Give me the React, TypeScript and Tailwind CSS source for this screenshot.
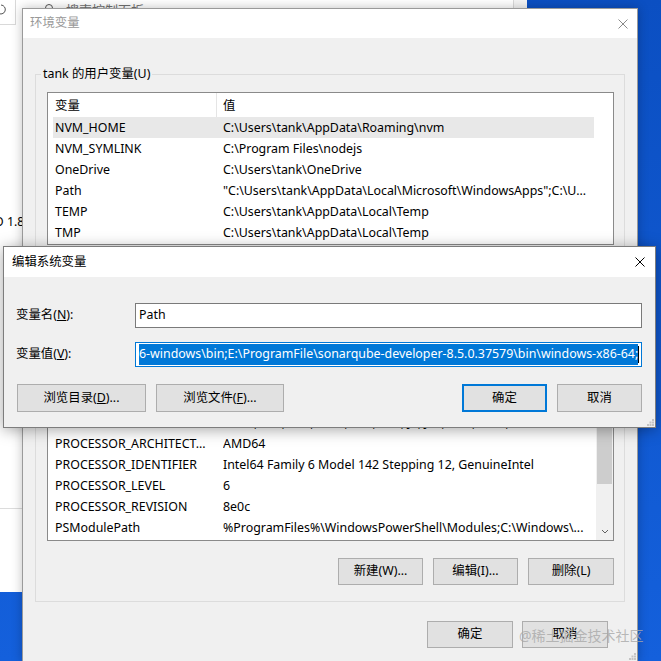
import React from 'react'

type Row = [string, string]

const userVars: Row[] = [
  ['NVM_HOME', 'C:\\Users\\tank\\AppData\\Roaming\\nvm'],
  ['NVM_SYMLINK', 'C:\\Program Files\\nodejs'],
  ['OneDrive', 'C:\\Users\\tank\\OneDrive'],
  ['Path', '"C:\\Users\\tank\\AppData\\Local\\Microsoft\\WindowsApps";C:\\U...'],
  ['TEMP', 'C:\\Users\\tank\\AppData\\Local\\Temp'],
  ['TMP', 'C:\\Users\\tank\\AppData\\Local\\Temp'],
]

const sysVars: Row[] = [
  ['OS', 'Windows_NT'],
  ['Path', 'C:\\Program Files\\Common Files\\Oracle\\Java\\javapath;C:\\Windows...'],
  ['PATHEXT', '.COM;.EXE;.BAT;.CMD;.VBS;.VBE;.JS;.JSE;.WSF;.WSH;.MSC'],
  ['PROCESSOR_ARCHITECT...', 'AMD64'],
  ['PROCESSOR_IDENTIFIER', 'Intel64 Family 6 Model 142 Stepping 12, GenuineIntel'],
  ['PROCESSOR_LEVEL', '6'],
  ['PROCESSOR_REVISION', '8e0c'],
  ['PSModulePath', '%ProgramFiles%\\WindowsPowerShell\\Modules;C:\\Windows\\...'],
]

const CloseIcon = ({ className }: { className: string }) => (
  <svg width="10" height="10" viewBox="0 0 10 10" className={className}>
    <path d="M0.5 0.5L9.5 9.5M9.5 0.5L0.5 9.5" stroke="currentColor" strokeWidth="1" />
  </svg>
)

const Grip = ({ className }: { className: string }) => (
  <svg width="7" height="7" viewBox="0 0 7 7" className={className}>
    <rect x="5" y="0" width="2" height="2" fill="#c4c4c4" />
    <rect x="2.5" y="2.5" width="2" height="2" fill="#c4c4c4" />
    <rect x="5" y="2.5" width="2" height="2" fill="#c4c4c4" />
    <rect x="0" y="5" width="2" height="2" fill="#c4c4c4" />
    <rect x="2.5" y="5" width="2" height="2" fill="#c4c4c4" />
    <rect x="5" y="5" width="2" height="2" fill="#c4c4c4" />
  </svg>
)

const Btn = ({ children, className = '', primary = false }: { children: React.ReactNode; className?: string; primary?: boolean }) => (
  <button
    type="button"
    className={`h-full flex items-center justify-center bg-[#e1e1e1] text-black ${primary ? 'border-2 border-[#0078d7]' : 'border border-[#adadad]'} ${className}`}
  >
    {children}
  </button>
)

const ScrollBar = () => (
  <div className="absolute right-0 top-0 bottom-0 w-[17px] bg-[#f0f0f0] flex flex-col">
    <div className="h-[17px] flex items-center justify-center">
      <svg width="8" height="5" viewBox="0 0 8 5"><path d="M1 4L4 1L7 4" stroke="#606060" fill="none" /></svg>
    </div>
    <div className="flex-1">
      <div className="mt-[36px] mx-[1px] h-[85px] bg-[#cdcdcd]" />
    </div>
    <div className="h-[17px] flex items-center justify-center">
      <svg width="8" height="5" viewBox="0 0 8 5"><path d="M1 1L4 4L7 1" stroke="#606060" fill="none" /></svg>
    </div>
  </div>
)

const VarList = ({ rows, className, selected, scroll }: { rows: Row[]; className: string; selected?: number; scroll?: boolean }) => (
  <div className={`relative bg-white border border-[#8a8a8a] overflow-hidden ${className}`}>
    <div className="flex h-[24px] w-[546px] items-center">
      <div className="w-[169px] h-full pl-[7px] pt-[2px] flex items-center border-r border-[#e5e5e5]">变量</div>
      <div className="pl-[6px] pt-[2px]">值</div>
    </div>
    {rows.map(([name, value], i) => (
      <div key={name + i} className={`ml-[5px] w-[541px] h-[21px] pt-[1px] flex items-center whitespace-nowrap ${i === selected ? 'bg-[#e8e8e8]' : ''}`}>
        <div className="w-[170px] pl-[2px] overflow-hidden">{name}</div>
        <div className="flex-1 overflow-hidden">{value}</div>
      </div>
    ))}
    {scroll && <ScrollBar />}
  </div>
)

const ListButtons = () => (
  <div className="mt-[17px] h-[27px] flex justify-end gap-[10px]">
    <Btn className="w-[85px]">新建(W)...</Btn>
    <Btn className="w-[85px]">编辑(I)...</Btn>
    <Btn className="w-[86px]">删除(L)</Btn>
  </div>
)

export default function App() {
  return (
    <div className="relative w-[661px] h-[661px] overflow-hidden bg-gradient-to-b from-[#0b4fc2] to-[#1460dc] text-[12.4px] text-black font-['Noto_Sans','Noto_Sans_CJK_SC',sans-serif]">
      {/* control panel window behind */}
      <div className="absolute left-0 top-0 w-[527px] h-[592px] bg-white flex flex-col">
        <div className="flex h-[26px]">
          <div className="w-[16px] h-[25px] border-r border-b border-[#d9d9d9] overflow-hidden">
            <svg width="15" height="25" viewBox="0 0 15 25">
              <path d="M1 5 A4.5 4.5 0 1 1 -2 13" stroke="#555" fill="none" />
            </svg>
          </div>
          <div className="w-[498px] border-r border-[#d9d9d9] flex items-start pl-[26px] pt-[1px] gap-[12px] text-[#707070] text-[13px]">
            <svg width="12" height="12" viewBox="0 0 12 12" className="mt-[2px]">
              <circle cx="7" cy="5" r="3.5" stroke="#555" fill="none" />
              <path d="M4.5 7.5L1 11" stroke="#555" />
            </svg>
            <span>搜索控制面板</span>
          </div>
          <div className="flex-1 bg-[#f4f4f4]" />
        </div>
        <div className="mt-[188px] h-[16px] flex items-center whitespace-nowrap -ml-[6px]">O 1.8</div>
        <div className="mt-[278px] h-px bg-[#dcdcdc]" />
      </div>

      {/* 环境变量 */}
      <div className="absolute left-[22px] top-[8px] w-[616px] h-[654px] bg-[#f0f0f0] border border-[#9a9a9a] shadow-[0_0_10px_rgba(0,0,0,0.25)] flex flex-col">
        <div className="h-[29px] shrink-0 bg-white flex items-center pl-[7px] text-[#999]">
          <span>环境变量</span>
          <CloseIcon className="ml-auto mr-[9px] text-[#8a8a8a]" />
        </div>
        <div className="flex flex-col px-[12px] pt-[28px]">
          <fieldset className="border border-[#dcdcdc] pl-[11px] pr-[10px] pb-[16px]">
            <legend className="-ml-[6px] px-[2px] leading-[16px]">tank 的用户变量(U)</legend>
            <VarList rows={userVars} selected={0} className="mt-[10px] h-[153px]" />
            <ListButtons />
          </fieldset>
          <fieldset className="mt-[13px] border border-[#dcdcdc] pl-[11px] pr-[10px] pb-[16px]">
            <legend className="-ml-[6px] px-[2px] leading-[16px]">系统变量(S)</legend>
            <VarList rows={sysVars} scroll className="mt-[10px] h-[196px]" />
            <ListButtons />
          </fieldset>
          <div className="mt-[19px] h-[27px] flex justify-end gap-[9px] mr-[17px]">
            <Btn className="w-[86px]">确定</Btn>
            <Btn className="w-[86px]">取消</Btn>
          </div>
        </div>
        <Grip className="absolute right-[1px] bottom-[1px]" />
      </div>

      {/* 编辑系统变量 */}
      <div className="absolute left-[3px] top-[246px] w-[653px] h-[182px] bg-[#f0f0f0] border border-[#7d7d7d] shadow-[0_2px_14px_rgba(0,0,0,0.35)] flex flex-col">
        <div className="h-[30px] shrink-0 bg-white flex items-center pl-[8px]">
          <span>编辑系统变量</span>
          <CloseIcon className="ml-auto mr-[10px] text-black" />
        </div>
        <div className="flex flex-col pl-[12px] pr-[13px] pt-[26px]">
          <div className="flex items-center h-[25px]">
            <label className="w-[119px]">变量名(<u>N</u>):</label>
            <div className="flex-1 h-full bg-white border border-[#7a7a7a] pl-[3px] flex items-center">Path</div>
          </div>
          <div className="mt-[14px] flex items-center h-[25px]">
            <label className="w-[119px]">变量值(<u>V</u>):</label>
            <div className="flex-1 h-full bg-white border border-[#0078d7] pl-[3px] flex items-center overflow-hidden whitespace-nowrap">
              <span className="h-[21px] flex items-center bg-[#0078d7] text-white">
                6-windows\bin;E:\ProgramFile\sonarqube-developer-8.5.0.37579\bin\windows-x86-64;
              </span>
              <span className="w-px h-[17px] bg-black" />
            </div>
          </div>
          <div className="mt-[17px] h-[28px] flex">
            <Btn className="ml-[1px] w-[129px]">浏览目录(<u>D</u>)...</Btn>
            <Btn className="ml-[10px] w-[128px]">浏览文件(<u>F</u>)...</Btn>
            <Btn primary className="ml-auto w-[85px]">确定</Btn>
            <Btn className="ml-[10px] w-[85px]">取消</Btn>
          </div>
        </div>
        <Grip className="absolute right-[1px] bottom-[1px]" />
      </div>

      {/* watermark */}
      <div className="absolute left-[519px] top-[625px] text-[14px] text-[#a8a8a8]/80 whitespace-nowrap">@稀土掘金技术社区</div>
    </div>
  )
}
